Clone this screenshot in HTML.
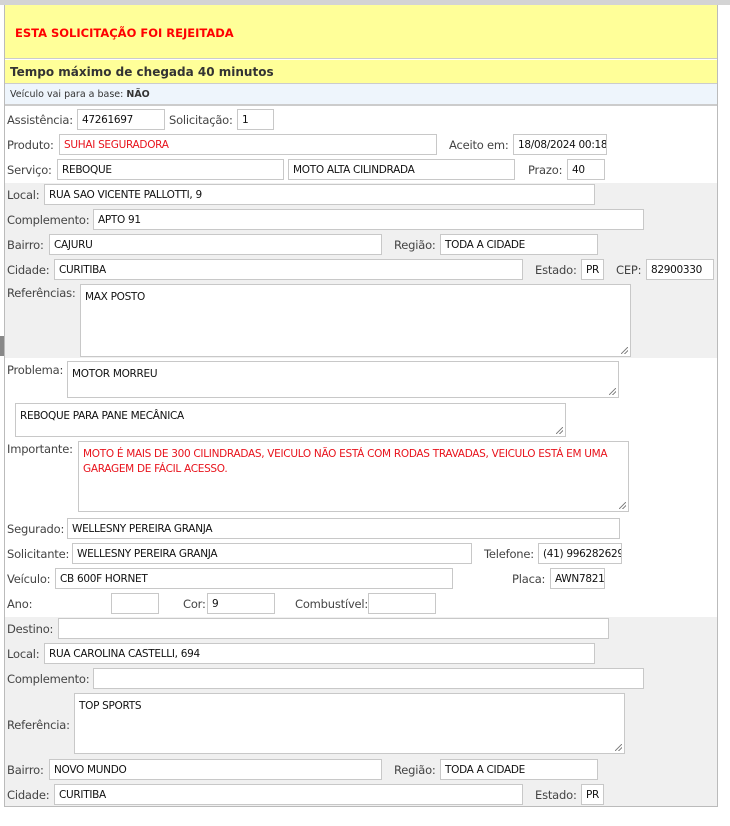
<!DOCTYPE html>
<html><head><meta charset="utf-8"><style>
*{box-sizing:border-box;margin:0;padding:0}
body{width:730px;height:826px;background:#fff;position:relative;overflow:hidden;font-family:"DejaVu Sans","Liberation Sans",sans-serif;}
.a{position:absolute}
.l{position:absolute;font-size:11.5px;color:#444;white-space:nowrap;letter-spacing:-0.2px}
.i{position:absolute;height:21px;border:1px solid #c8c8c8;background:#fff;font-size:10.5px;color:#111;padding:4px 0 0 4px;white-space:nowrap;overflow:hidden;letter-spacing:-0.3px}
.t{position:absolute;border:1px solid #c8c8c8;background:#fff;font-size:10.5px;color:#111;padding:5px 4px;line-height:15px;letter-spacing:-0.3px}
.t:after{content:"";position:absolute;right:2px;bottom:2px;width:7px;height:7px;background:linear-gradient(135deg,transparent 45%,#888 45%,#888 55%,transparent 55%,transparent 70%,#888 70%,#888 80%,transparent 80%)}
.r{color:#e8131c}
</style></head><body>
<div class="a" style="left:0;top:0;width:730px;height:5px;background:#d4d4d4"></div>
<div class="a" style="left:4px;top:5px;width:714px;height:802px;border-left:1px solid #bbb;border-right:1px solid #bbb;border-bottom:1px solid #bbb"></div>
<div class="a" style="left:0;top:336px;width:4px;height:20px;background:#888"></div>
<div class="a" style="left:5px;top:5px;width:712px;height:54px;background:#ffff99;border-bottom:1px solid #ccc"></div>
<div class="a" style="left:15px;top:26px;font-size:11.5px;font-weight:bold;color:#f00">ESTA SOLICITAÇÃO FOI REJEITADA</div>
<div class="a" style="left:5px;top:60px;width:712px;height:24px;background:#ffff99;border-bottom:1px solid #ccc"></div>
<div class="a" style="left:10px;top:65px;font-size:12px;font-weight:bold;color:#333">Tempo máximo de chegada 40 minutos</div>
<div class="a" style="left:5px;top:84px;width:712px;height:22px;background:#eef5fc;border-bottom:2px solid #ccc"></div>
<div class="a" style="left:10px;top:89px;font-size:9.5px;color:#333">Veículo vai para a base: <b>NÃO</b></div>
<div class="a" style="left:5px;top:183px;width:712px;height:175px;background:#f0f0f0"></div>
<div class="a" style="left:5px;top:617px;width:712px;height:189px;background:#f0f0f0"></div>

<span class="l" style="left:7px;top:113px">Assistência:</span><div class="i" style="left:77px;top:109px;width:88px">47261697</div>
<span class="l" style="left:169px;top:113px">Solicitação:</span><div class="i" style="left:237px;top:109px;width:37px">1</div>
<span class="l" style="left:7px;top:138px">Produto:</span><div class="i r" style="left:59px;top:134px;width:378px">SUHAI SEGURADORA</div>
<span class="l" style="left:449px;top:138px">Aceito em:</span><div class="i" style="left:513px;top:134px;width:94px">18/08/2024 00:18</div>
<span class="l" style="left:7px;top:163px">Serviço:</span><div class="i" style="left:57px;top:159px;width:227px">REBOQUE</div>
<div class="i" style="left:288px;top:159px;width:227px">MOTO ALTA CILINDRADA</div>
<span class="l" style="left:528px;top:163px">Prazo:</span><div class="i" style="left:567px;top:159px;width:38px">40</div>

<span class="l" style="left:7px;top:188px">Local:</span><div class="i" style="left:44px;top:184px;width:551px">RUA SAO VICENTE PALLOTTI, 9</div>
<span class="l" style="left:7px;top:213px">Complemento:</span><div class="i" style="left:93px;top:209px;width:551px">APTO 91</div>
<span class="l" style="left:7px;top:238px">Bairro:</span><div class="i" style="left:49px;top:234px;width:333px">CAJURU</div>
<span class="l" style="left:394px;top:238px">Região:</span><div class="i" style="left:440px;top:234px;width:158px">TODA A CIDADE</div>
<span class="l" style="left:7px;top:263px">Cidade:</span><div class="i" style="left:54px;top:259px;width:469px">CURITIBA</div>
<span class="l" style="left:535px;top:263px">Estado:</span><div class="i" style="left:581px;top:259px;width:23px">PR</div>
<span class="l" style="left:616px;top:263px">CEP:</span><div class="i" style="left:646px;top:259px;width:68px">82900330</div>
<span class="l" style="left:7px;top:286px">Referências:</span><div class="t" style="left:80px;top:284px;width:551px;height:73px">MAX POSTO</div>

<span class="l" style="left:7px;top:363px">Problema:</span><div class="t" style="left:67px;top:361px;width:552px;height:37px">MOTOR MORREU</div>
<div class="t" style="left:15px;top:403px;width:551px;height:34px">REBOQUE PARA PANE MECÂNICA</div>
<span class="l" style="left:7px;top:442px">Importante:</span><div class="t r" style="left:78px;top:441px;width:551px;height:71px">MOTO É MAIS DE 300 CILINDRADAS, VEICULO NÃO ESTÁ COM RODAS TRAVADAS, VEICULO ESTÁ EM UMA GARAGEM DE FÁCIL ACESSO.</div>
<span class="l" style="left:7px;top:522px">Segurado:</span><div class="i" style="left:67px;top:518px;width:553px">WELLESNY PEREIRA GRANJA</div>
<span class="l" style="left:7px;top:547px">Solicitante:</span><div class="i" style="left:72px;top:543px;width:400px">WELLESNY PEREIRA GRANJA</div>
<span class="l" style="left:484px;top:547px">Telefone:</span><div class="i" style="left:538px;top:543px;width:84px">(41) 996282629</div>
<span class="l" style="left:7px;top:572px">Veículo:</span><div class="i" style="left:55px;top:568px;width:398px">CB 600F HORNET</div>
<span class="l" style="left:512px;top:572px">Placa:</span><div class="i" style="left:550px;top:568px;width:55px">AWN7821</div>
<span class="l" style="left:7px;top:597px">Ano:</span><div class="i" style="left:111px;top:593px;width:48px"></div>
<span class="l" style="left:183px;top:597px">Cor:</span><div class="i" style="left:207px;top:593px;width:68px">9</div>
<span class="l" style="left:295px;top:597px">Combustível:</span><div class="i" style="left:368px;top:593px;width:68px"></div>

<span class="l" style="left:7px;top:622px">Destino:</span><div class="i" style="left:58px;top:618px;width:551px"></div>
<span class="l" style="left:7px;top:647px">Local:</span><div class="i" style="left:44px;top:643px;width:551px">RUA CAROLINA CASTELLI, 694</div>
<span class="l" style="left:7px;top:672px">Complemento:</span><div class="i" style="left:93px;top:668px;width:551px"></div>
<span class="l" style="left:7px;top:718px">Referência:</span><div class="t" style="left:74px;top:693px;width:551px;height:61px">TOP SPORTS</div>
<span class="l" style="left:7px;top:763px">Bairro:</span><div class="i" style="left:49px;top:759px;width:333px">NOVO MUNDO</div>
<span class="l" style="left:394px;top:763px">Região:</span><div class="i" style="left:440px;top:759px;width:158px">TODA A CIDADE</div>
<span class="l" style="left:7px;top:788px">Cidade:</span><div class="i" style="left:54px;top:784px;width:469px">CURITIBA</div>
<span class="l" style="left:535px;top:788px">Estado:</span><div class="i" style="left:581px;top:784px;width:23px">PR</div>
</body></html>
